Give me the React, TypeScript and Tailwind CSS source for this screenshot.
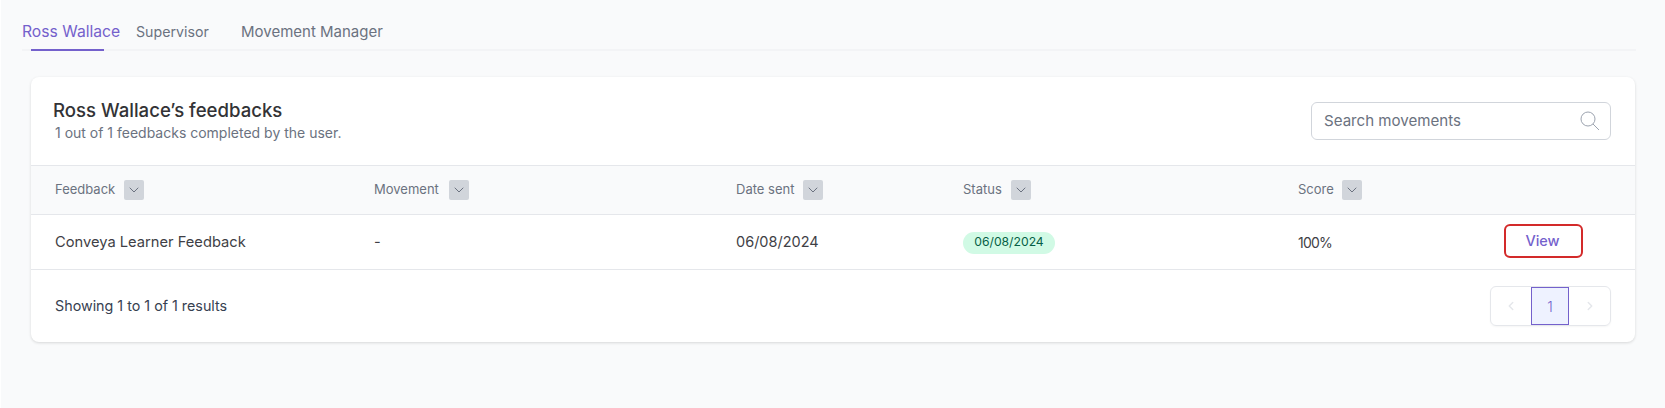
import { ChevronDown, ChevronLeft, ChevronRight } from "lucide-react";

const columns = [
  { label: "Feedback", width: "w-[319px]", labelWidth: "w-[69px]" },
  { label: "Movement", width: "w-[362px]", labelWidth: "w-[75px]" },
  { label: "Date sent", width: "w-[227px]", labelWidth: "w-[67px]" },
  { label: "Status", width: "w-[335px]", labelWidth: "w-[48px]" },
  { label: "Score", width: "w-[206px]", labelWidth: "w-[44px]" },
];

export default function App() {
  return (
    <div className="min-h-[408px] bg-[#f9fafb] border-l border-white pt-[21px] font-['Inter','Liberation_Sans',sans-serif]">
      <div className="ml-[21px] mr-[29px] flex h-[30px] items-start border-b-2 border-[#f3f4f6] text-[15px] leading-[22px] text-[#6b7280]">
        <div className="relative h-[30px] w-[106px]">
          <span className="block text-[15.7px] text-[#7461cc]">Ross Wallace</span>
          <div className="absolute bottom-0 left-[9px] h-[2px] w-[73px] bg-[#7461cc]" />
        </div>
        <span className="w-[105px] pl-[8px] text-[14.2px]">Supervisor</span>
        <span className="pl-[8px]">Movement Manager</span>
      </div>

      <div className="ml-[30px] mr-[30px] mt-[26px] h-[265px] overflow-hidden rounded-lg bg-white shadow-[0_1px_3px_rgba(0,0,0,0.14)]">
        <div className="flex h-[88px] items-start justify-between pl-[22px] pr-[24px]">
          <div className="pt-[20px]">
            <h2 className="text-[18.6px] leading-[26px] font-medium text-[#333336]">Ross Wallace’s feedbacks</h2>
            <p className="ml-[2px] mt-[1px] text-[14px] leading-[18px] text-[#6b7280]">1 out of 1 feedbacks completed by the user.</p>
          </div>
          <div className="mt-[25px] flex h-[38px] w-[300px] items-center justify-between rounded-md border border-[#d1d5db] pl-[12px] pr-[10px] text-[15.1px] text-[#6b7280]">
            <span className="pt-[1px]">Search movements</span>
            <svg className="h-[20px] w-[20px] text-[#9ca3af]" viewBox="0 0 20 20" fill="none" stroke="currentColor" strokeWidth="1">
              <circle cx="8" cy="8" r="7" />
              <path d="M13 13l6 6" />
            </svg>
          </div>
        </div>

        <div className="flex h-[50px] items-center border-y border-[#e5e7eb] bg-[#f9fafb] pl-[24px] text-[13px] text-[#6b7280]">
          {columns.map((col) => (
            <div key={col.label} className={`flex items-center ${col.width}`}>
              <span className={col.labelWidth}>{col.label}</span>
              <span className="flex h-[20px] w-[20px] items-center justify-center rounded-[2px] bg-[#d1d5db]">
                <ChevronDown className="h-[16px] w-[16px] text-[#6b7280]" strokeWidth={1.5} />
              </span>
            </div>
          ))}
        </div>

        <div className="flex h-[55px] items-center border-b border-[#e5e7eb] pl-[24px] text-[14.5px] text-[#3f3f46]">
          <span className="w-[319px] text-[14.7px]">Conveya Learner Feedback</span>
          <span className="w-[362px]">-</span>
          <span className="w-[227px]">06/08/2024</span>
          <span className="w-[335px]">
            <span className="inline-flex h-[22px] w-[92px] items-center justify-center rounded-full bg-[#d1fae5] text-[12.2px] text-[#065f46]">06/08/2024</span>
          </span>
          <span className="w-[206px] text-[14px] tracking-[-0.8px]">100%</span>
          <button className="mb-[2px] h-[34px] w-[79px] rounded-md border-2 border-[#d32a2a] pr-[2px] text-[14.5px] font-medium text-[#7461cc]">View</button>
        </div>

        <div className="flex h-[72px] items-center justify-between pl-[24px] pr-[24px] text-[14.3px] text-[#374151]">
          <span>Showing 1 to 1 of 1 results</span>
          <div className="flex h-[40px] w-[121px] items-stretch rounded-md border border-[#e5e7eb] shadow-[0_1px_2px_rgba(0,0,0,0.04)]">
            <span className="flex w-[40px] items-center justify-center text-[#e5e7eb]">
              <ChevronLeft className="h-[14px] w-[14px]" strokeWidth={2.5} />
            </span>
            <span className="flex w-[38px] items-center justify-center border border-[#7461cc] bg-[#eef2ff] text-[14px] font-light text-[#7461cc]">1</span>
            <span className="flex w-[41px] items-center justify-center text-[#e5e7eb]">
              <ChevronRight className="h-[14px] w-[14px]" strokeWidth={2.5} />
            </span>
          </div>
        </div>
      </div>
    </div>
  );
}
